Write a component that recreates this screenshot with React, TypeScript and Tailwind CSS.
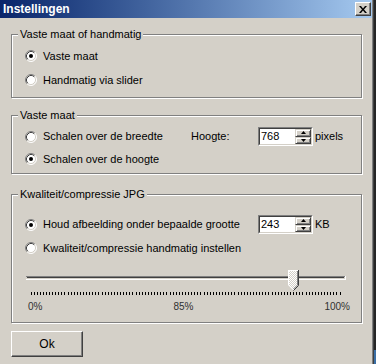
import React from "react";

const Radio = ({ checked }: { checked?: boolean }) => (
  <svg width="12" height="12" viewBox="0 0 12 12" className="shrink-0">
    <circle cx="6" cy="6" r="5" fill="#fff" />
    <path d="M2.11 9.89 A5.5 5.5 0 0 1 9.89 2.11" fill="none" stroke="#808080" />
    <path d="M9.89 2.11 A5.5 5.5 0 0 1 2.11 9.89" fill="none" stroke="#fff" />
    <path d="M2.82 9.18 A4.5 4.5 0 0 1 9.18 2.82" fill="none" stroke="#404040" />
    <path d="M9.18 2.82 A4.5 4.5 0 0 1 2.82 9.18" fill="none" stroke="#d4d0c8" />
    {checked && <circle cx="6" cy="6" r="2" fill="#000" />}
  </svg>
);

const SpinBtn = ({ up }: { up?: boolean }) => (
  <div className="flex flex-1 items-center justify-center border border-t-[#d4d0c8] border-l-[#d4d0c8] border-r-[#404040] border-b-[#404040] bg-[#d4d0c8] shadow-[inset_1px_1px_0_#fff,inset_-1px_-1px_0_#808080]">
    <svg width="5" height="3" viewBox="0 0 5 3">
      {up ? <path d="M2.5 0 L5 3 L0 3 Z" fill="#000" /> : <path d="M0 0 L5 0 L2.5 3 Z" fill="#000" />}
    </svg>
  </div>
);

const Spinner = ({ value }: { value: string }) => (
  <div className="flex h-[19px] w-[55px] border border-t-[#808080] border-l-[#808080] border-r-white border-b-white">
    <div className="flex flex-1 border border-t-[#404040] border-l-[#404040] border-r-[#d4d0c8] border-b-[#d4d0c8] bg-white">
      <span className="flex-1 pl-[1px] leading-[15px]">{value}</span>
      <div className="flex w-[16px] flex-col">
        <SpinBtn up />
        <SpinBtn />
      </div>
    </div>
  </div>
);

const Group = ({ label, className, children }: { label: string; className: string; children: React.ReactNode }) => (
  <div className={`relative w-[351px] border border-[#808080] shadow-[inset_1px_1px_0_#fff,1px_1px_0_#fff] ${className}`}>
    <span className="absolute -top-[7px] left-[6px] bg-[#d4d0c8] px-[2px] leading-[13px]">{label}</span>
    {children}
  </div>
);

const Option = ({ checked, label }: { checked?: boolean; label: string }) => (
  <div className="flex h-[12px] items-center gap-[6px]">
    <Radio checked={checked} />
    <span className="whitespace-nowrap leading-[13px]">{label}</span>
  </div>
);

const Slider = () => {
  const ticks = Array.from({ length: 101 }, (_, i) => 11 + Math.floor(i * 3.09));
  return (
    <svg width="330" height="28" viewBox="0 0 330 28" className="-ml-[5px]">
      <defs>
        <pattern id="dither" width="2" height="2" patternUnits="userSpaceOnUse">
          <rect width="2" height="2" fill="#d4d0c8" />
          <rect width="1" height="1" fill="#fff" />
          <rect x="1" y="1" width="1" height="1" fill="#fff" />
        </pattern>
      </defs>
      <line x1="6" y1="8.5" x2="325" y2="8.5" stroke="#808080" />
      <line x1="7" y1="9.5" x2="324" y2="9.5" stroke="#404040" />
      <line x1="6" y1="11.5" x2="326" y2="11.5" stroke="#fff" />
      <line x1="325.5" y1="8" x2="325.5" y2="12" stroke="#fff" />
      {ticks.map((x, i) => (
        <rect key={i} x={x} y="24" width="1" height="3" fill="#000" />
      ))}
      <g transform="translate(268,2)">
        <polygon points="0,0 11,0 11,15 5.5,20.5 0,15" fill="url(#dither)" />
        <polyline points="0.5,15 0.5,0.5 10,0.5" fill="none" stroke="#fff" />
        <polyline points="0.5,15 5.2,19.7" fill="none" stroke="#fff" />
        <polyline points="9.5,1 9.5,15 5.5,19" fill="none" stroke="#808080" />
        <polyline points="10.5,0 10.5,15.5 5.5,20.5" fill="none" stroke="#404040" />
      </g>
    </svg>
  );
};

export default function App() {
  return (
    <div className="flex h-[364px] w-[376px] overflow-hidden font-['Liberation_Sans',Arial,sans-serif] text-[11px] text-black">
      <div className="w-[374px] border-r border-[#404040]">
        <div className="flex h-full flex-col border-r border-[#808080] bg-[#d4d0c8]">
          <div className="flex h-[18px] shrink-0 items-center justify-between bg-linear-to-r from-[#0a246a] to-[#a6caf0] pl-[3px] pr-[1px]">
            <span className="text-[12px] font-bold leading-none text-white">Instellingen</span>
            <div className="flex h-[14px] w-[16px] items-center justify-center border border-t-white border-l-white border-r-[#404040] border-b-[#404040] bg-[#d4d0c8] shadow-[inset_-1px_-1px_0_#808080]">
              <svg width="8" height="7" viewBox="0 0 8 7">
                <path d="M0 0 L2 0 L4 2.5 L6 0 L8 0 L5 3.5 L8 7 L6 7 L4 4.5 L2 7 L0 7 L3 3.5 Z" fill="#000" />
              </svg>
            </div>
          </div>

          <div className="flex flex-col pl-[11px] pt-[16px]">
            <Group label="Vaste maat of handmatig" className="flex h-[64px] flex-col gap-[12px] pl-[13px] pt-[15px]">
              <Option checked label="Vaste maat" />
              <Option label="Handmatig via slider" />
            </Group>

            <Group label="Vaste maat" className="mt-[17px] flex h-[59px] flex-col gap-[7px] pl-[13px] pt-[11px]">
              <div className="flex h-[19px] items-center">
                <div className="w-[166px]">
                  <Option label="Schalen over de breedte" />
                </div>
                <span className="w-[67px]">Hoogte:</span>
                <Spinner value="768" />
                <span className="ml-[2px]">pixels</span>
              </div>
              <Option checked label="Schalen over de hoogte" />
            </Group>

            <Group label="Kwaliteit/compressie JPG" className="mt-[20px] flex h-[129px] flex-col pl-[13px] pt-[20px]">
              <div className="flex h-[19px] items-center">
                <div className="w-[233px]">
                  <Option checked label="Houd afbeelding onder bepaalde grootte" />
                </div>
                <Spinner value="243" />
                <span className="ml-[2px]">KB</span>
              </div>
              <div className="mt-[8px]">
                <Option label="Kwaliteit/compressie handmatig instellen" />
              </div>
              <div className="mt-[14px]">
                <Slider />
              </div>
              <div className="mt-[4px] flex w-[325px] justify-between pl-[3px] text-[10px] leading-[13px] text-[#303030]">
                <span>0%</span>
                <span>85%</span>
                <span>100%</span>
              </div>
            </Group>

            <button className="mt-[8px] flex h-[26px] w-[72px] items-center justify-center border border-t-white border-l-white border-r-[#404040] border-b-[#404040] bg-[#d4d0c8] text-[12px] shadow-[inset_-1px_-1px_0_#808080]">
              Ok
            </button>
          </div>
        </div>
      </div>
      <div className="flex w-[2px] flex-col">
        <div className="flex-1 bg-[#262626]" />
        <div className="h-[14px] bg-[#3a6ea5]" />
      </div>
    </div>
  );
}
